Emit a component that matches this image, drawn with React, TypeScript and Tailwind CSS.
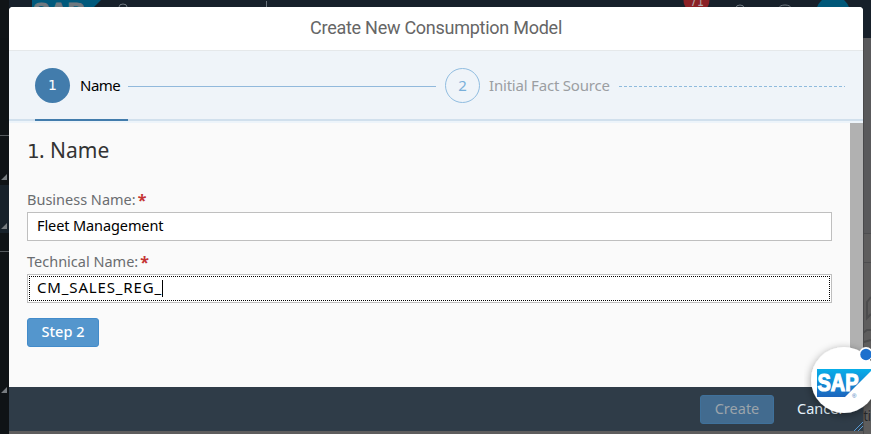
import { useState } from "react";

function Backdrop() {
  return (
    <div className="flex h-full flex-col">
      <div className="flex h-[38px] shrink-0 bg-[#17202a]">
        <div className="w-[9px] bg-[#101417]" />
        <svg className="h-[38px] w-[862px]" viewBox="9 0 862 38">
          <path d="M32 0H101L83 18H32Z" fill="#00597c" />
          <text x="33" y="20" fontSize="23" fontWeight="700" fill="#707980" stroke="#707980" textLength="51" lengthAdjust="spacingAndGlyphs" fontFamily="Liberation Sans, sans-serif">SAP</text>
          <path d="M119 7a4 3 0 0 1 8 0M736 8a4 3 0 0 1 8 0M779 8a6 3 0 0 1 12 0" stroke="#6f7880" fill="none" />
          <path d="M266.500 1V7" stroke="#68717a" />
          <circle cx="696.500" cy="0" r="13" fill="#8b2025" />
          <text x="697" y="6" fontSize="14" textAnchor="middle" fill="#b3a4a6" fontFamily="DejaVu Sans, sans-serif" textLength="14" lengthAdjust="spacingAndGlyphs">71</text>
          <circle cx="833" cy="13" r="17" fill="#005778" />
        </svg>
      </div>
      <div className="flex flex-1 bg-[#5e5d5d]">
        <svg className="h-full w-[9px]" viewBox="0 38 9 396">
          <path d="M0 38H9V434H0Z" fill="#0f1316" />
          <path d="M0 185H9V233H0Z" fill="#17212a" />
          <path d="M0 135.500H9M0 251.500H9" stroke="#565b5f" />
          <path d="M1 180H7V174ZM1 229H7V223ZM1 393H7V387Z" fill="#777c80" />
        </svg>
        <svg className="h-full w-[862px]" viewBox="9 38 862 396">
          <path d="M863 38H871V233H863Z" fill="#59595b" />
          <path d="M863 233.500H871M863 262.500H871" stroke="#4d4d4f" />
          <path d="M871 297l-4 5v16l4-4M863 333l4-3h4M871 340l-7 2" stroke="#4c4c4d" strokeWidth="2" fill="none" />
          <path d="M863.500 38V434" stroke="#49494b" />
          <text x="863.500" y="421" fontSize="14" fill="#242628" textLength="7.500" lengthAdjust="spacingAndGlyphs" fontFamily="Noto Sans, sans-serif">ti</text>
        </svg>
      </div>
    </div>
  );
}

function StepBar() {
  return (
    <nav className="flex h-[72px] shrink-0 flex-col bg-[#eff4f9]">
      <div className="flex h-[68px] items-center pt-px pr-[18px] pl-[26px] text-[15px]">
        <span className="flex size-[35px] shrink-0 items-center justify-center rounded-full bg-[#427cac] font-['DejaVu_Sans',sans-serif] text-[14px] text-white">1</span>
        <span className="ml-[10px] w-[48px] tracking-[-0.5px] whitespace-nowrap text-black">Name</span>
        <span className="mt-[2px] h-px w-[308px] shrink-0 bg-[#91b9dc]" />
        <span className="ml-[9px] flex size-[35px] shrink-0 items-center justify-center rounded-full border border-[#91bde0] text-[#79afd9]">2</span>
        <span className="ml-[9px] w-[130px] shrink-0 tracking-[-0.2px] whitespace-nowrap text-[#9b9ea2]">Initial Fact Source</span>
        <span className="mt-[2px] h-px flex-1 bg-[repeating-linear-gradient(90deg,#8fbbdd_0_3px,transparent_3px_5px)]" />
      </div>
      <div className="h-[2px] bg-[#d1e0ed] pl-[26px]">
        <div className="h-full w-[93px] bg-[#427cac]" />
      </div>
      <div className="h-[2px] bg-[#edf4fa]" />
    </nav>
  );
}

function FieldLabel({ text }: { text: string }) {
  return (
    <label className="flex h-[20px] items-center whitespace-nowrap text-[#6a6d70]">
      {text}
      <span className="ml-[2px] text-[16px] leading-none font-bold text-[#c53434]">*</span>
    </label>
  );
}

function SapBadge() {
  return (
    <div className="absolute top-[330px] left-[804px] h-[104px] w-[67px] overflow-hidden">
      <svg width="76" height="104" viewBox="804 330 76 104">
        <defs>
          <linearGradient id="sapBlue" x1="0" y1="0" x2="0" y2="1">
            <stop offset="0" stopColor="#08aee9" />
            <stop offset="1" stopColor="#1d65bd" />
          </linearGradient>
          <filter id="badgeShadow" x="-30%" y="-30%" width="160%" height="160%">
            <feDropShadow dx="0" dy="2" stdDeviation="4" floodColor="#000" floodOpacity="0.4" />
          </filter>
        </defs>
        <circle cx="844" cy="380" r="33" fill="#fff" filter="url(#badgeShadow)" />
        <path d="M817 369H873L845 397H817Z" fill="url(#sapBlue)" />
        <text x="817.500" y="391" fontSize="23" fontWeight="700" fill="#fff" stroke="#fff" strokeWidth="1.200" textLength="41" lengthAdjust="spacingAndGlyphs" fontFamily="Liberation Sans, sans-serif">SAP</text>
        <text x="852" y="398" fontSize="6" fill="#3572b8" fontFamily="Liberation Sans, sans-serif">®</text>
        <circle cx="866" cy="354" r="7" fill="#fff" />
        <circle cx="866" cy="354.500" r="5.700" fill="#1d70cd" />
      </svg>
    </div>
  );
}

export default function App() {
  const [businessName, setBusinessName] = useState("Fleet Management");
  const technicalName = "CM_SALES_REG_";

  return (
    <div className="relative h-[434px] w-[871px] overflow-hidden font-['Noto_Sans',sans-serif] text-[14.5px]">
      <Backdrop />
      <section className="absolute top-[7px] left-[9px] flex h-[424px] w-[854px] flex-col overflow-hidden rounded-t-[4px] bg-[#fafafa]">
        <header className="flex h-[43px] shrink-0 items-center justify-center bg-white pb-[2px] font-[Roboto,sans-serif] text-[18px] tracking-[-0.26px] text-[#666]">
          <h1>Create New Consumption Model</h1>
        </header>
        <div className="flex shrink-0 flex-col border-t border-[#e5e8ea]">
          <StepBar />
        </div>
        <div className="flex min-h-0 flex-1">
          <main className="flex flex-1 flex-col pr-[18px] pl-[18px]">
            <h2 className="mt-[12px] h-[30px] text-[21px] leading-[30px] text-[#333]">
              <span className="font-['DejaVu_Sans',sans-serif] text-[20px] tracking-[-0.8px]">1</span>. Name
            </h2>
            <div className="mt-[25px]"><FieldLabel text="Business Name:" /></div>
            <input
              className="mt-[2px] h-[29px] w-[805px] shrink-0 border border-[#bfbfbf] bg-white px-[9px] pb-[3px] tracking-[-0.1px] text-black outline-none"
              value={businessName}
              onChange={(event) => setBusinessName(event.target.value)}
            />
            <div className="mt-[11px]"><FieldLabel text="Technical Name:" /></div>
            <div className="mt-[2px] h-[29px] w-[805px] shrink-0 border border-[#bfbfbf] bg-white p-px">
              <div className="flex h-full items-center border border-dotted border-black pl-[7px] text-black">
                <span className="-mt-[2px] text-[15px] tracking-[0.85px]">{technicalName}</span>
                <span className="-mt-px h-[17px] w-px bg-black" />
              </div>
            </div>
            <button className="mt-[15px] h-[29px] w-[72px] shrink-0 rounded-[3px] border border-[#428bca] bg-[#5496cd] pb-px font-medium text-white">Step 2</button>
          </main>
          <div className="w-[13px] shrink-0 bg-[#b1b1b1]" />
        </div>
        <footer className="flex h-[44px] shrink-0 items-center justify-end bg-[#2f3c48] pr-[20px]">
          <button className="h-[29px] w-[74px] rounded-[3px] border border-[#3f719b] bg-[#426b8f] text-[#9ba4ab]">Create</button>
          <button className="ml-[23px] w-[46px] text-left text-[#e4f1fb]">Cancel</button>
          <svg className="-mr-[20px] ml-[10px] h-[10px] w-[10px] self-end" viewBox="0 0 10 10">
            <path d="M1 10L10 1M5 10L10 5" stroke="#5899d0" />
          </svg>
        </footer>
      </section>
      <SapBadge />
    </div>
  );
}
